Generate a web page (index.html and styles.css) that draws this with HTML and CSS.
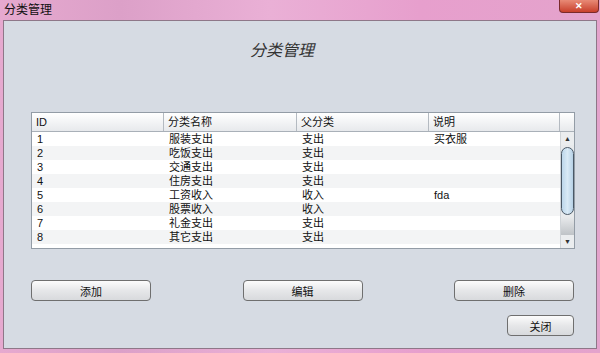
FILE: index.html
```html
<!DOCTYPE html>
<html lang="zh-CN">
<head>
  <meta charset="UTF-8">
  <title>分类管理</title>
  <link rel="stylesheet" href="styles.css">
</head>
<body>

  <div class="window">
    <div class="titlebar">
      <span class="title">分类管理</span>
      <span class="close">✕</span>
    </div>

    <div class="panel">
      <h1>分类管理</h1>

      <div class="table">
        <div class="thead">
          <div class="th">ID</div>
          <div class="th">分类名称</div>
          <div class="th">父分类</div>
          <div class="th">说明</div>
          <div class="th corner"></div>
        </div>
        <div class="tbody">
          <div class="rows">
            <div class="tr"><span>1</span><span>服装支出</span><span>支出</span><span>买衣服</span></div>
            <div class="tr"><span>2</span><span>吃饭支出</span><span>支出</span><span></span></div>
            <div class="tr"><span>3</span><span>交通支出</span><span>支出</span><span></span></div>
            <div class="tr"><span>4</span><span>住房支出</span><span>支出</span><span></span></div>
            <div class="tr"><span>5</span><span>工资收入</span><span>收入</span><span>fda</span></div>
            <div class="tr"><span>6</span><span>股票收入</span><span>收入</span><span></span></div>
            <div class="tr"><span>7</span><span>礼金支出</span><span>支出</span><span></span></div>
            <div class="tr"><span>8</span><span>其它支出</span><span>支出</span><span></span></div>
          </div>
          <div class="scrollbar">
            <div class="arrow">▲</div>
            <div class="track"><div class="thumb"></div></div>
            <div class="arrow">▼</div>
          </div>
        </div>
      </div>

      <div class="actions">
        <button>添加</button>
        <button>编辑</button>
        <button>删除</button>
      </div>

      <div class="footer">
        <button class="small">关闭</button>
      </div>
    </div>
  </div>

</body>
</html>
```

FILE: styles.css
```css
body {
  margin: 0;
  font-family: "Liberation Sans", "Noto Sans CJK SC", sans-serif;
  font-size: 11px;
  color: #111;
}
.window {
  width: 600px;
  height: 353px;
  box-sizing: border-box;
  padding: 0 3px 3px 3px;
  background: linear-gradient(90deg, #e6a9cf 0%, #dca0c8 20%, #eab0d6 45%, #e79fcd 70%, #e4a3cc 100%);
}
.titlebar {
  height: 20px;
  display: flex;
  justify-content: space-between;
  align-items: flex-start;
}
.title {
  font-size: 12px;
  line-height: 20px;
  padding-left: 1px;
}
.close {
  width: 38px;
  height: 12px;
  margin-right: -2px;
  border: 1px solid #7a2a2a;
  border-top: none;
  border-radius: 0 0 4px 4px;
  background: linear-gradient(#e88a76, #c8402c);
  color: #fff;
  font-size: 9px;
  font-weight: bold;
  line-height: 12px;
  text-align: center;
}
.panel {
  height: 329px;
  box-sizing: border-box;
  border: 1px solid #8e7788;
  background: #d6dbe3;
}
h1 {
  margin: 20px 0 0 246px;
  font-size: 16px;
  font-weight: normal;
  font-style: italic;
  line-height: 20px;
  color: #333;
}
.table {
  width: 544px;
  box-sizing: border-box;
  margin: 51px 0 0 27px;
  border: 1px solid #939ca6;
  background: #fff;
}
.thead {
  display: grid;
  grid-template-columns: 132px 133px 132px 131px 14px;
  height: 18px;
  border-bottom: 1px solid #a9b0b8;
  background: linear-gradient(#ffffff, #e7e9ec);
}
.th {
  box-sizing: border-box;
  border-right: 1px solid #b4bac1;
  padding-left: 4px;
  line-height: 18px;
}
.th.corner {
  border-right: none;
}
.tbody {
  display: flex;
  height: 116px;
}
.rows {
  flex: 1;
}
.tr {
  display: grid;
  grid-template-columns: 132px 133px 132px 131px;
  height: 14px;
  line-height: 14px;
}
.tr:nth-child(even) {
  background: #f3f4f5;
}
.tr span {
  padding-left: 5px;
}
.scrollbar {
  width: 14px;
  display: flex;
  flex-direction: column;
  background: #ebedef;
  border-left: 1px solid #d0d4d8;
}
.arrow {
  height: 13px;
  font-size: 7px;
  line-height: 13px;
  text-align: center;
  color: #333;
}
.track {
  flex: 1;
  padding-top: 2px;
  background: linear-gradient(#e8eaec 80%, #bfc3c7);
}
.thumb {
  height: 68px;
  box-sizing: border-box;
  border: 1px solid #4a5866;
  border-radius: 7px;
  background: linear-gradient(90deg, #bcd6ea, #d9eaf6 50%, #b7d1e6);
}
.actions {
  width: 543px;
  margin: 31px 0 0 27px;
  display: flex;
  justify-content: space-between;
}
button {
  width: 120px;
  height: 21px;
  padding: 0;
  border: 1px solid #6f6f6f;
  border-radius: 4px;
  background: linear-gradient(#fcfcfc, #e6e7e9 50%, #d8dadd);
  font-family: "Liberation Sans", "Noto Sans CJK SC", sans-serif;
  font-size: 11px;
  color: #111;
}
.footer {
  width: 543px;
  margin: 14px 0 0 27px;
  display: flex;
  justify-content: flex-end;
}
button.small {
  width: 67px;
}
```
